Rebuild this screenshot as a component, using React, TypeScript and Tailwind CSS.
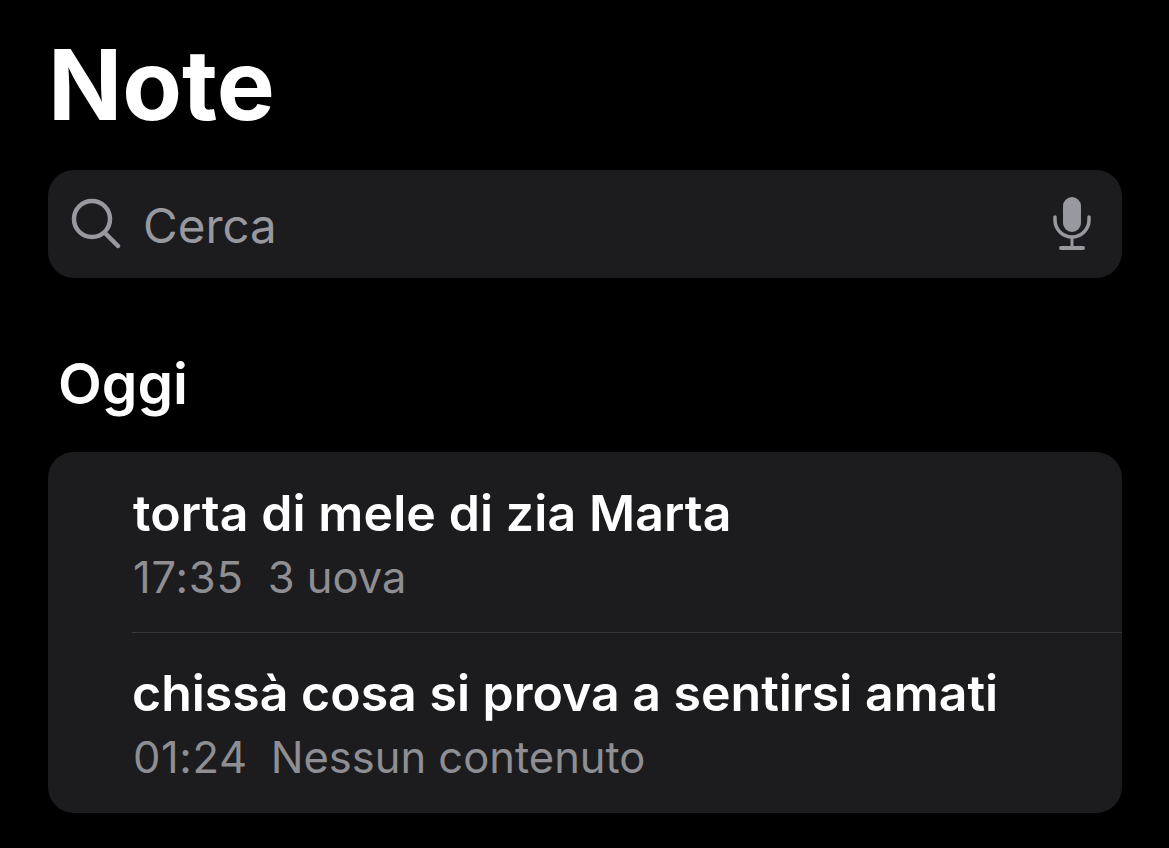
export default function App() {
  const f = { fontFamily: 'Inter, "Liberation Sans", sans-serif' };
  return (
    <div className="w-[1169px] h-[848px] bg-black overflow-hidden pl-[48px] pr-[47px] text-white" style={f}>
      <h1 className="pt-[39px] h-[170px] text-[97.5px] leading-[92px] font-bold">Note</h1>
      <div className="h-[108px] rounded-[26px] bg-[#1c1c1e] flex items-center pl-[23px] pr-[31px] text-[#98989f]">
        <svg width="50" height="52" viewBox="0 0 50 52" fill="none" stroke="#98989f" strokeWidth="4.5" strokeLinecap="round"><circle cx="21" cy="21" r="18"/><path d="M34 35L47 48"/></svg>
        <span className="ml-[22px] pt-[3px] text-[47.5px] leading-none flex-1">Cerca</span>
        <svg width="38" height="54" viewBox="0 0 38 54" fill="none" className="mt-[-1px]"><rect x="10" y="0" width="18" height="35" rx="9" fill="#98989f"/><path d="M2 20v3a17 17 0 0 0 34 0v-3" stroke="#98989f" strokeWidth="3.5" strokeLinecap="round"/><path d="M19 40v10" stroke="#98989f" strokeWidth="3"/><path d="M8 51h22" stroke="#98989f" strokeWidth="4" strokeLinecap="round"/></svg>
      </div>
      <h2 className="ml-[10px] mt-[72px] h-[102px] text-[57px] leading-[68px] font-semibold">Oggi</h2>
      <div className="h-[361px] rounded-[26px] bg-[#1c1c1e] pl-[84px]">
        <div className="h-[181px] border-b border-[#38383a] pt-[29px]">
          <div className="text-[50px] leading-[64px] font-semibold pl-[1px] tracking-[0.1px]">torta di mele di zia Marta</div>
          <div className="mt-[2px] text-[43.5px] leading-[60px] text-[#8e8e93] pl-[1px]"><span className="tracking-[0.8px]">17:35</span><span className="ml-[24px]">3 uova</span></div>
        </div>
        <div className="pt-[28px]">
          <div className="text-[50px] leading-[64px] font-semibold">chissà cosa si prova a sentirsi amati</div>
          <div className="mt-[2px] text-[43.5px] leading-[60px] text-[#8e8e93] pl-[1px]"><span className="tracking-[0.6px]">01:24</span><span className="ml-[23px]">Nessun contenuto</span></div>
        </div>
      </div>
    </div>
  );
}
